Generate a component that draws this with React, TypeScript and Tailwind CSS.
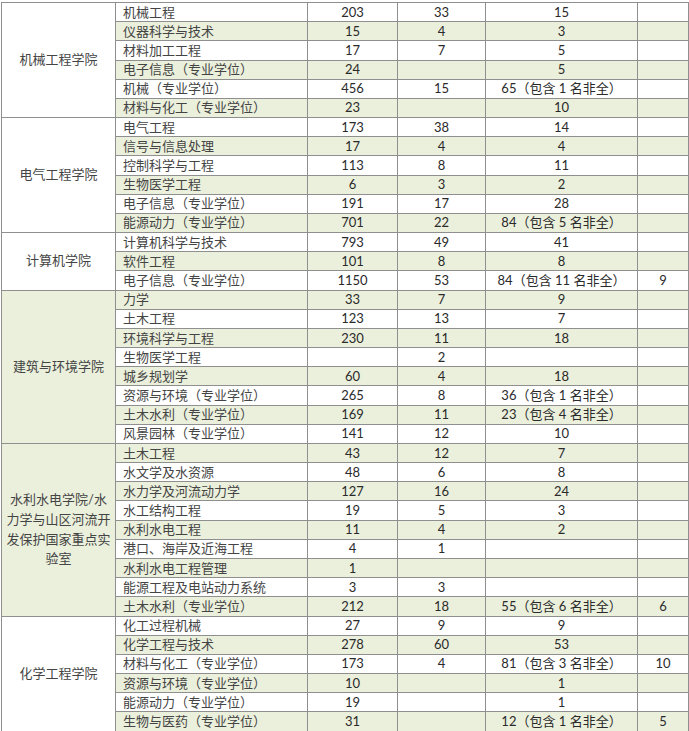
import React from "react";

type Row = [string, string, string, string, string];
type Group = { name: React.ReactNode; rows: Row[] };

const groups: Group[] = [
  {
    name: "机械工程学院",
    rows: [
      ["机械工程", "203", "33", "15", ""],
      ["仪器科学与技术", "15", "4", "3", ""],
      ["材料加工工程", "17", "7", "5", ""],
      ["电子信息（专业学位）", "24", "", "5", ""],
      ["机械（专业学位）", "456", "15", "65（包含 1 名非全）", ""],
      ["材料与化工（专业学位）", "23", "", "10", ""],
    ],
  },
  {
    name: "电气工程学院",
    rows: [
      ["电气工程", "173", "38", "14", ""],
      ["信号与信息处理", "17", "4", "4", ""],
      ["控制科学与工程", "113", "8", "11", ""],
      ["生物医学工程", "6", "3", "2", ""],
      ["电子信息（专业学位）", "191", "17", "28", ""],
      ["能源动力（专业学位）", "701", "22", "84（包含 5 名非全）", ""],
    ],
  },
  {
    name: "计算机学院",
    rows: [
      ["计算机科学与技术", "793", "49", "41", ""],
      ["软件工程", "101", "8", "8", ""],
      ["电子信息（专业学位）", "1150", "53", "84（包含 11 名非全）", "9"],
    ],
  },
  {
    name: "建筑与环境学院",
    rows: [
      ["力学", "33", "7", "9", ""],
      ["土木工程", "123", "13", "7", ""],
      ["环境科学与工程", "230", "11", "18", ""],
      ["生物医学工程", "", "2", "", ""],
      ["城乡规划学", "60", "4", "18", ""],
      ["资源与环境（专业学位）", "265", "8", "36（包含 1 名非全）", ""],
      ["土木水利（专业学位）", "169", "11", "23（包含 4 名非全）", ""],
      ["风景园林（专业学位）", "141", "12", "10", ""],
    ],
  },
  {
    name: (
      <>
        水利水电学院/水
        <br />
        力学与山区河流开
        <br />
        发保护国家重点实
        <br />
        验室
      </>
    ),
    rows: [
      ["土木工程", "43", "12", "7", ""],
      ["水文学及水资源", "48", "6", "8", ""],
      ["水力学及河流动力学", "127", "16", "24", ""],
      ["水工结构工程", "19", "5", "3", ""],
      ["水利水电工程", "11", "4", "2", ""],
      ["港口、海岸及近海工程", "4", "1", "", ""],
      ["水利水电工程管理", "1", "", "", ""],
      ["能源工程及电站动力系统", "3", "3", "", ""],
      ["土木水利（专业学位）", "212", "18", "55（包含 6 名非全）", "6"],
    ],
  },
  {
    name: "化学工程学院",
    rows: [
      ["化工过程机械", "27", "9", "9", ""],
      ["化学工程与技术", "278", "60", "53", ""],
      ["材料与化工（专业学位）", "173", "4", "81（包含 3 名非全）", "10"],
      ["资源与环境（专业学位）", "10", "", "1", ""],
      ["能源动力（专业学位）", "19", "", "1", ""],
      ["生物与医药（专业学位）", "31", "", "12（包含 1 名非全）", "5"],
    ],
  },
];

export default function App() {
  let idx = 0;
  return (
    <div
      className="w-[689px] h-[731px] overflow-hidden bg-white pt-[2px] pl-[1px]"
      style={{ fontFamily: "Lato, 'Noto Sans CJK SC', sans-serif" }}
    >
      <table className="table-fixed border-collapse w-[687px] text-[13px] leading-none text-[#2a2a2a]">
        <colgroup>
          <col className="w-[114px]" />
          <col className="w-[192px]" />
          <col className="w-[90px]" />
          <col className="w-[88px]" />
          <col className="w-[152px]" />
          <col className="w-[51px]" />
        </colgroup>
        <tbody>
          {groups.map((g, gi) =>
            g.rows.map((r, ri) => {
              const green = idx % 2 === 1;
              idx++;
              const bg = green ? "bg-[#ebf0dc]" : "bg-white";
              return (
                <tr key={`${gi}-${ri}`} className="h-[19.18px]">
                  {ri === 0 && (
                    <td
                      rowSpan={g.rows.length}
                      className={`${bg} border border-[#8f8f8f] text-center align-middle leading-[19.7px] text-[#444] px-1`}
                    >
                      {g.name}
                    </td>
                  )}
                  <td className={`${bg} border border-[#8f8f8f] pl-[7px] text-left text-[#444] whitespace-nowrap p-0`}>
                    {r[0]}
                  </td>
                  <td className={`${bg} border border-[#8f8f8f] text-center p-0`}>{r[1]}</td>
                  <td className={`${bg} border border-[#8f8f8f] text-center p-0`}>{r[2]}</td>
                  <td className={`${bg} border border-[#8f8f8f] text-center p-0 whitespace-nowrap`}>{r[3]}</td>
                  <td className={`${bg} border border-[#8f8f8f] text-center p-0`}>{r[4]}</td>
                </tr>
              );
            })
          )}
        </tbody>
      </table>
    </div>
  );
}
